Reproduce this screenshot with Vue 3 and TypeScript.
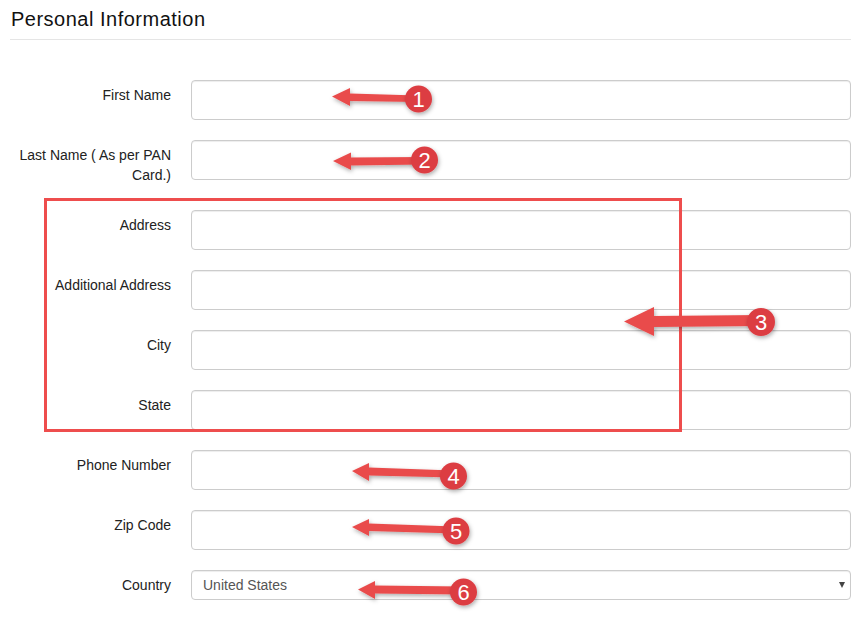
<script setup lang="ts">
interface Callout {
  n: number
  points: string
  cx: number
  cy: number
  r: number
}

const labels: string[] = [
  'First Name',
  'Last Name ( As per PAN Card.)',
  'Address',
  'Additional Address',
  'City',
  'State',
  'Phone Number',
  'Zip Code',
]

// Arrow outlines run tip -> head top -> shaft -> head bottom
const callouts: Callout[] = [
  { n: 1, points: '332,96.5 350,88 350,93.5 418,95.5 418,102 350,101 350,106', cx: 418.5, cy: 99, r: 13.5 },
  { n: 2, points: '333,161 351,152.5 351,157.5 424,157 424,164.5 351,165.5 351,170', cx: 424.5, cy: 160, r: 13.5 },
  { n: 3, points: '624,321.5 654,307 654,316 761,315 761,326 654,327 654,336', cx: 761, cy: 322, r: 14 },
  { n: 4, points: '352,471 369,463 369,467.5 453,470.5 453,477.5 369,475.5 369,481', cx: 453.5, cy: 476, r: 13.5 },
  { n: 5, points: '352,527 369,519 369,523.5 455,526.5 455,533.5 369,531 369,536', cx: 456, cy: 531, r: 13.5 },
  { n: 6, points: '358,589.5 375,581 375,585.5 463,586.5 463,594.5 375,593.5 375,599', cx: 463.5, cy: 592, r: 13.5 },
]
</script>

<template>
  <div class="page">
    <h3 class="title">Personal Information</h3>

    <form class="form">
      <div v-for="label in labels" :key="label" class="row">
        <label class="label">{{ label }}</label>
        <input class="control" type="text" />
      </div>

      <div class="row">
        <label class="label">Country</label>
        <div class="select-wrap">
          <select class="control select">
            <option>United States</option>
          </select>
        </div>
      </div>
    </form>

    <!-- Red annotations drawn over the form -->
    <svg class="notes" width="866" height="617" viewBox="0 0 866 617">
      <defs>
        <filter id="soft" x="-20%" y="-60%" width="140%" height="240%">
          <feDropShadow dx="1" dy="2" stdDeviation="2" flood-color="#000" flood-opacity="0.32" />
        </filter>
      </defs>
      <rect class="box" x="45.5" y="199.5" width="635" height="231" />
      <g v-for="c in callouts" :key="c.n">
        <polygon class="arrow" :points="c.points" filter="url(#soft)" />
        <circle class="dot" :cx="c.cx" :cy="c.cy" :r="c.r" filter="url(#soft)" />
        <text class="num" :x="c.cx" :y="c.cy + 8">{{ c.n }}</text>
      </g>
    </svg>
  </div>
</template>

<style>
body {
  background: #fff;
}
</style>

<style scoped>
.page {
  position: relative;
  width: 866px;
  height: 617px;
  overflow: hidden;
  box-sizing: border-box;
  padding: 0 15px 0 10px;
  font-family: "Liberation Sans", Arial, sans-serif;
  font-size: 14px;
  line-height: 20px;
  color: #222;
}

.title {
  margin: 0;
  height: 32px;
  padding: 7px 0 0 1px;
  font-size: 20px;
  font-weight: 400;
  line-height: 24px;
  letter-spacing: 0.5px;
  color: #111;
  border-bottom: 1px solid #e5e5e5;
}

.form {
  display: flex;
  flex-direction: column;
  gap: 20px;
  padding-top: 40px;
}

.row {
  display: flex;
  align-items: flex-start;
  gap: 20px;
}

.label {
  flex: 0 0 161px;
  padding: 5px 0;
  text-align: right;
}

.control {
  flex: 1;
  min-width: 0;
  height: 40px;
  box-sizing: border-box;
  padding: 0 11px;
  background: #fff;
  border: 1px solid #ccc;
  border-radius: 4px;
  box-shadow: inset 0 1px 1px rgba(0, 0, 0, 0.075);
  font: inherit;
  color: #555;
}

.select-wrap {
  position: relative;
  flex: 1;
  display: flex;
}

.select-wrap::after {
  content: "";
  position: absolute;
  right: 6px;
  top: 12px;
  border-left: 3px solid transparent;
  border-right: 3px solid transparent;
  border-top: 6px solid #444;
  pointer-events: none;
}

.select {
  height: 30px;
  appearance: none;
}

.notes {
  position: absolute;
  top: 0;
  left: 0;
  pointer-events: none;
}

.box {
  fill: none;
  stroke: #ee4d4d;
  stroke-width: 3;
}

.arrow {
  fill: #e94c4c;
}

.dot {
  fill: #dc3c42;
}

.num {
  fill: #fff;
  font-size: 22px;
  text-anchor: middle;
  font-family: "Liberation Sans", Arial, sans-serif;
}
</style>
